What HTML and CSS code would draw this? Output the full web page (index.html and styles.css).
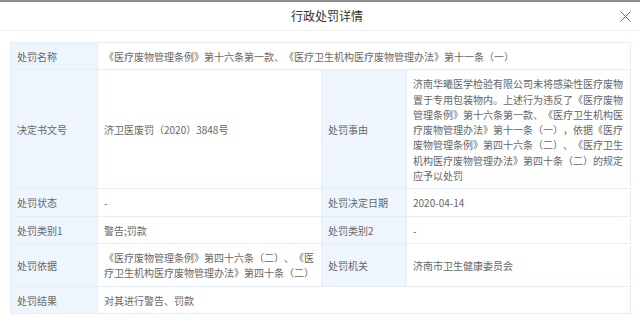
FILE: index.html
```html
<!DOCTYPE html>
<html lang="zh-CN">
<head>
<meta charset="utf-8">
<title>行政处罚详情</title>
<link rel="stylesheet" href="styles.css">
</head>
<body>
<div class="dialog">
  <div class="dialog-header">
    <span class="dialog-title">行政处罚详情</span>
    <span class="dialog-close" aria-label="关闭">
      <svg width="11" height="11" viewBox="0 0 11 11"><path d="M0.5 0.5L10.5 10.5M10.5 0.5L0.5 10.5" stroke="#666" stroke-width="1" fill="none"/></svg>
    </span>
  </div>
  <div class="dialog-body">
    <table class="detail">
      <colgroup>
        <col class="c-label1"><col class="c-value1"><col class="c-label2"><col class="c-value2">
      </colgroup>
      <tr>
        <th>处罚名称</th>
        <td colspan="3">《医疗废物管理条例》第十六条第一款、《医疗卫生机构医疗废物管理办法》第十一条（一）</td>
      </tr>
      <tr>
        <th>决定书文号</th>
        <td>济卫医废罚（2020）3848号</td>
        <th>处罚事由</th>
        <td>济南华曦医学检验有限公司未将感染性医疗废物<br>置于专用包装物内。上述行为违反了《医疗废物<br>管理条例》第十六条第一款、《医疗卫生机构医<br>疗废物管理办法》第十一条（一），依据《医疗<br>废物管理条例》第四十六条（二）、《医疗卫生<br>机构医疗废物管理办法》第四十条（二）的规定<br>应予以处罚</td>
      </tr>
      <tr>
        <th>处罚状态</th>
        <td>-</td>
        <th>处罚决定日期</th>
        <td>2020-04-14</td>
      </tr>
      <tr>
        <th>处罚类别1</th>
        <td>警告;罚款</td>
        <th>处罚类别2</th>
        <td>-</td>
      </tr>
      <tr>
        <th>处罚依据</th>
        <td>《医疗废物管理条例》第四十六条（二）、《医<br>疗卫生机构医疗废物管理办法》第四十条（二）</td>
        <th>处罚机关</th>
        <td>济南市卫生健康委员会</td>
      </tr>
      <tr>
        <th>处罚结果</th>
        <td colspan="3">对其进行警告、罚款</td>
      </tr>
    </table>
  </div>
</div>
</body>
</html>
```
FILE: styles.css
```css
* { box-sizing: border-box; }
html, body {
  margin: 0;
  padding: 0;
  background: #fff;
}
body {
  font-family: "Noto Sans CJK SC", "Noto Sans", sans-serif;
  color: #666;
  border-top: 2px solid #8c8c8c;
  text-spacing-trim: space-all;
}
.dialog-header {
  height: 29px;
  display: flex;
  align-items: center;
  justify-content: center;
  position: relative;
  border-bottom: 1px solid #f0f0f0;
}
.dialog-title {
  font-size: 12px;
  color: #333;
  line-height: 16px;
  margin-left: 14px;
}
.dialog-close {
  position: absolute;
  right: 9px;
  top: 9px;
  width: 11px;
  height: 11px;
  display: flex;
}
.dialog-body {
  padding: 11px 10px 0 10px;
}
.detail {
  width: 620px;
  table-layout: fixed;
  border-collapse: collapse;
  font-size: 10px;
  line-height: 15.3px;
  text-spacing-trim: space-all;
}
.c-label1 { width: 87px; }
.c-value1 { width: 224px; }
.c-label2 { width: 85px; }
.c-value2 { width: 224px; }
.detail th,
.detail td {
  border: 1px solid #e6eef7;
  padding: 6px 5px 5px 6px;
  vertical-align: middle;
  text-align: left;
  font-weight: normal;
  color: #666;
}
.detail th {
  background: #eef5fc;
}
.detail td {
  background: #fff;
  white-space: nowrap;
}
```
